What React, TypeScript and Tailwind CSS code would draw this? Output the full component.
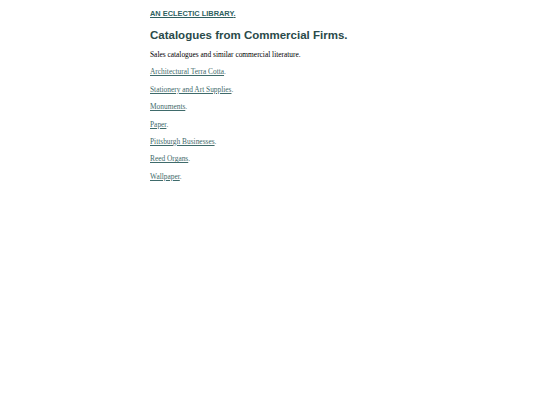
export default function App() {
  const links = [
    "Architectural Terra Cotta",
    "Stationery and Art Supplies",
    "Monuments",
    "Paper",
    "Pittsburgh Businesses",
    "Reed Organs",
    "Wallpaper",
  ];
  return (
    <div className="min-h-[405px] bg-white">
      <div className="ml-[150px] w-[240px] pt-[9px]">
        <a
          href="#"
          className="block text-[7.4px] leading-[9px] font-bold text-[#2f5f5f] underline"
          style={{ fontFamily: '"Liberation Sans", Arial, sans-serif' }}
        >
          AN ECLECTIC LIBRARY<span className="no-underline">.</span>
        </a>
        <h1
          className="mt-[10px] text-[11.5px] leading-[14px] font-bold text-[#2a4a4a]"
          style={{ fontFamily: '"Liberation Sans", Arial, sans-serif' }}
        >
          Catalogues from Commercial Firms.
        </h1>
        <div style={{ fontFamily: '"Liberation Serif", "Times New Roman", serif' }}>
          <p className="mt-[8px] text-[7.4px] leading-[9px] text-black">
            Sales catalogues and similar commercial literature.
          </p>
          {links.map((l) => (
            <p key={l} className="mt-[8.4px] text-[7.4px] leading-[9px] text-[#3f6b6b]">
              <a href="#" className="underline">
                {l}
              </a>
              .
            </p>
          ))}
        </div>
      </div>
    </div>
  );
}
